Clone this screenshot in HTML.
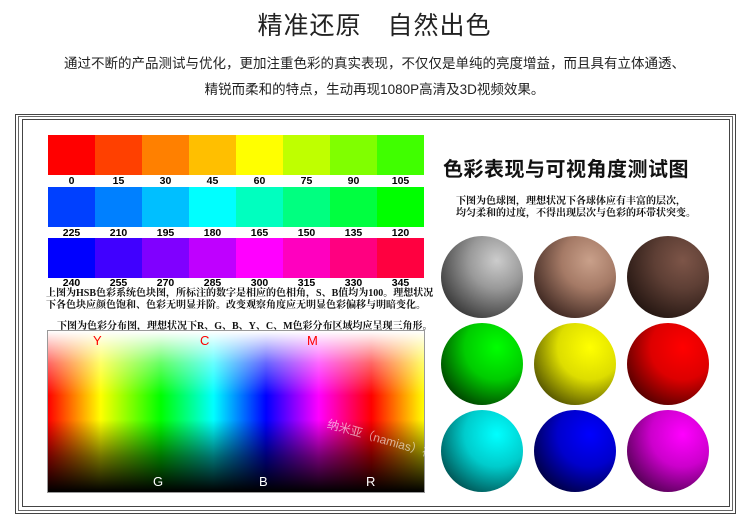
<!DOCTYPE html>
<html><head><meta charset="utf-8"><style>
*{margin:0;padding:0;box-sizing:border-box}
body{width:749px;height:516px;background:#fff;position:relative;overflow:hidden;font-family:"Liberation Sans","Noto Sans CJK SC",sans-serif}
.a{position:absolute}
.t1{left:0;width:749px;top:6px;text-align:center;font-size:25px;color:#222;letter-spacing:1px}
.p{left:0;width:749px;text-align:center;font-size:13.5px;color:#222}
.f1{left:15px;top:114px;width:721px;height:400px;border:1px solid #444}
.f2{left:18px;top:116px;width:715px;height:395px;border:1px solid #666}
.f3{left:22px;top:119px;width:708px;height:388px;border:1px solid #444}
.sw{height:40px;width:47px}
.num{font-size:10.5px;font-weight:bold;text-align:center;width:47px}
.srf{font-family:"Liberation Serif","Noto Serif CJK SC",serif;font-size:10px;color:#111;font-weight:bold}
.sp{width:82px;height:82px;border-radius:50%}
</style></head><body>
<div class="a t1">精准还原　自然出色</div>
<div class="a p" style="top:52px">通过不断的产品测试与优化，更加注重色彩的真实表现，不仅仅是单纯的亮度增益，而且具有立体通透、</div>
<div class="a p" style="top:78px">精锐而柔和的特点，生动再现1080P高清及3D视频效果。</div>
<div class="a f1"></div><div class="a f2"></div><div class="a f3"></div>

<div class="a" style="left:48px;top:135px;display:flex">
<div class="sw" style="background:#f00"></div><div class="sw" style="background:#ff4000"></div><div class="sw" style="background:#ff8000"></div><div class="sw" style="background:#ffbf00"></div><div class="sw" style="background:#ff0"></div><div class="sw" style="background:#bfff00"></div><div class="sw" style="background:#80ff00"></div><div class="sw" style="background:#40ff00"></div></div>
<div class="a" style="left:48px;top:175px;display:flex"><div class="num">0</div><div class="num">15</div><div class="num">30</div><div class="num">45</div><div class="num">60</div><div class="num">75</div><div class="num">90</div><div class="num">105</div></div>
<div class="a" style="left:48px;top:187px;display:flex">
<div class="sw" style="background:#0040ff"></div><div class="sw" style="background:#0080ff"></div><div class="sw" style="background:#00bfff"></div><div class="sw" style="background:#0ff"></div><div class="sw" style="background:#00ffbf"></div><div class="sw" style="background:#00ff80"></div><div class="sw" style="background:#00ff40"></div><div class="sw" style="background:#0f0"></div></div>
<div class="a" style="left:48px;top:227px;display:flex"><div class="num">225</div><div class="num">210</div><div class="num">195</div><div class="num">180</div><div class="num">165</div><div class="num">150</div><div class="num">135</div><div class="num">120</div></div>
<div class="a" style="left:48px;top:238px;display:flex">
<div class="sw" style="background:#00f"></div><div class="sw" style="background:#4000ff"></div><div class="sw" style="background:#8000ff"></div><div class="sw" style="background:#bf00ff"></div><div class="sw" style="background:#f0f"></div><div class="sw" style="background:#ff00bf"></div><div class="sw" style="background:#ff0080"></div><div class="sw" style="background:#ff0040"></div></div>
<div class="a" style="left:48px;top:277px;display:flex"><div class="num">240</div><div class="num">255</div><div class="num">270</div><div class="num">285</div><div class="num">300</div><div class="num">315</div><div class="num">330</div><div class="num">345</div></div>
<div class="a srf" style="left:46px;top:288px;line-height:12px;width:390px;white-space:nowrap">上图为HSB色彩系统色块图，所标注的数字是相应的色相角，S、B值均为100。理想状况<br>下各色块应颜色饱和、色彩无明显并阶。改变观察角度应无明显色彩偏移与明暗变化。</div>
<div class="a srf" style="left:57px;top:317px;white-space:nowrap">下图为色彩分布图，理想状况下R、G、B、Y、C、M色彩分布区域均应呈现三角形。</div>

<div class="a" style="left:47px;top:330px;width:378px;height:163px;border:1px solid #999;background:linear-gradient(to bottom,rgba(255,255,255,1) 0%,rgba(255,255,255,.4) 20%,rgba(255,255,255,0) 40%,rgba(0,0,0,0) 55%,rgba(0,0,0,.55) 78%,rgba(0,0,0,1) 100%),linear-gradient(to right,#f00 0%,#ff0 14%,#0f0 30%,#0ff 44%,#00f 58%,#f0f 72%,#f00 86%,#ff0 100%)"></div>
<div class="a" style="left:93px;top:333px;color:#f00;font-size:13px">Y</div>
<div class="a" style="left:200px;top:333px;color:#f00;font-size:13px">C</div>
<div class="a" style="left:307px;top:333px;color:#f00;font-size:13px">M</div>
<div class="a" style="left:153px;top:474px;color:#fff;font-size:13px">G</div>
<div class="a" style="left:259px;top:474px;color:#fff;font-size:13px">B</div>
<div class="a" style="left:366px;top:474px;color:#fff;font-size:13px">R</div>
<div class="a" style="left:330px;top:415px;color:rgba(255,255,255,.6);font-size:12px;transform:rotate(16deg);transform-origin:left top;white-space:nowrap">纳米亚（namias）视店</div>

<div class="a" style="left:443px;top:153px;font-size:20px;font-weight:bold;color:#111;letter-spacing:.5px">色彩表现与可视角度测试图</div>
<div class="a srf" style="left:456px;top:196px;line-height:12px">下图为色球图，理想状况下各球体应有丰富的层次，<br>均匀柔和的过度，不得出现层次与色彩的环带状突变。</div>

<div class="a sp" style="left:441px;top:236px;background:radial-gradient(circle at 68% 30%,#ccc 0%,#999 35%,#444 75%,#111 100%)"></div>
<div class="a sp" style="left:534px;top:236px;background:radial-gradient(circle at 68% 30%,#c9a08a 0%,#a57a66 35%,#4a3129 75%,#110a08 100%)"></div>
<div class="a sp" style="left:627px;top:236px;background:radial-gradient(circle at 68% 30%,#7d5548 0%,#5e3f35 35%,#2a1a15 75%,#0a0605 100%)"></div>
<div class="a sp" style="left:441px;top:323px;background:radial-gradient(circle at 68% 30%,#0f0 0%,#0c0 40%,#040 80%,#000 100%)"></div>
<div class="a sp" style="left:534px;top:323px;background:radial-gradient(circle at 68% 30%,#ff0 0%,#dd0 40%,#550 80%,#000 100%)"></div>
<div class="a sp" style="left:627px;top:323px;background:radial-gradient(circle at 68% 30%,#f00 0%,#d00 40%,#500 80%,#000 100%)"></div>
<div class="a sp" style="left:441px;top:410px;background:radial-gradient(circle at 68% 30%,#0ff 0%,#0cc 40%,#055 80%,#000 100%)"></div>
<div class="a sp" style="left:534px;top:410px;background:radial-gradient(circle at 68% 30%,#00f 0%,#00c 40%,#004 80%,#000 100%)"></div>
<div class="a sp" style="left:627px;top:410px;background:radial-gradient(circle at 68% 30%,#f0f 0%,#c0c 40%,#505 80%,#000 100%)"></div>
</body></html>
